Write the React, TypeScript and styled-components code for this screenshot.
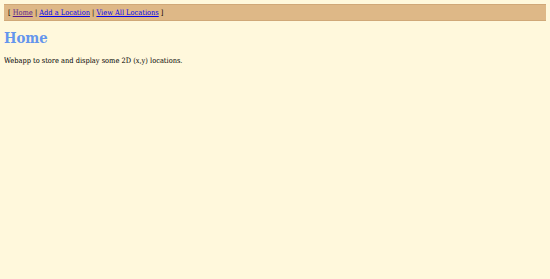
import React from "react";
import styled, { createGlobalStyle } from "styled-components";

const Global = createGlobalStyle`
  html, body { background: #fff8dc; }
  body {
    margin: 4px;
    font-family: "DejaVu Serif Condensed", "DejaVu Serif", serif;
    font-stretch: condensed;
    font-size: 7.4px;
    color: #000;
  }
`;

const Nav = styled.nav`
  background: #deb887;
  border: 1px solid #d0a878;
  margin: 0 -1px;
  padding: 3px 4px;
  line-height: 9px;
`;

const NavLink = styled.a<{ $visited?: boolean }>`
  color: ${(p) => (p.$visited ? "#551a8b" : "#0000ee")};
  text-decoration: underline;
`;

const Title = styled.h1`
  color: #6495ed;
  font-size: 14.7px;
  line-height: 17px;
  font-weight: bold;
  margin: 8px 0 10px;
`;

const Text = styled.p`
  margin: 0;
  line-height: 9px;
`;

export default function App() {
  return (
    <>
      <Global />
      <Nav>
        [ <NavLink $visited href="#">Home</NavLink> |{" "}
        <NavLink href="#">Add a Location</NavLink> |{" "}
        <NavLink href="#">View All Locations</NavLink> ]
      </Nav>
      <Title>Home</Title>
      <Text>Webapp to store and display some 2D (x,y) locations.</Text>
    </>
  );
}
